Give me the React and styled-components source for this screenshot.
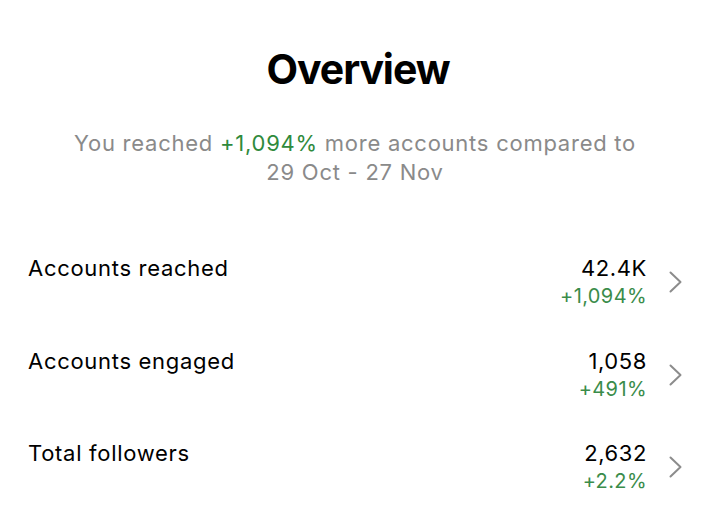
import React from "react";
import styled, { createGlobalStyle } from "styled-components";

const Global = createGlobalStyle`
  html, body { margin: 0; padding: 0; background: #ffffff; }
  body { font-family: Inter, "Noto Sans", "Liberation Sans", sans-serif; -webkit-font-smoothing: antialiased; }
`;

const Page = styled.div`
  width: 716px;
  height: 516px;
  box-sizing: border-box;
  padding: 49px 34px 0 28px;
  display: flex;
  flex-direction: column;
  overflow: hidden;
`;

const Title = styled.h1`
  margin: 0;
  font-size: 41px;
  line-height: 41px;
  font-weight: 700;
  color: #000;
  text-align: center;
  letter-spacing: -1.1px;
  padding-left: 6px;
`;

const Subtitle = styled.p`
  margin: 39px auto 0;
  width: 578px;
  font-size: 22px;
  line-height: 29px;
  color: #8a8a8a;
  text-align: center;
  letter-spacing: 0.75px;
  padding-left: 0;
`;

const Green = styled.span`
  color: ${(p) => p.$tone || "#2f8a3c"};
`;

const List = styled.div`
  margin-top: 67px;
  display: flex;
  flex-direction: column;
  gap: 36.5px;
`;

const Row = styled.div`
  display: flex;
  justify-content: space-between;
  align-items: flex-start;
`;

const Label = styled.div`
  font-size: 22px;
  line-height: 29px;
  letter-spacing: 0.7px;
  color: #000;
`;

const Right = styled.div`
  display: flex;
  align-items: center;
  gap: 22px;
`;

const Values = styled.div`
  display: flex;
  flex-direction: column;
  align-items: flex-end;
`;

const Value = styled.div`
  font-size: 22px;
  line-height: 29px;
  letter-spacing: 0.6px;
  color: #000;
`;

const Change = styled.div`
  font-size: 20px;
  line-height: 27px;
  letter-spacing: 0.4px;
  color: #3a8c4a;
`;

const Chevron = () => (
  <svg width="13" height="22" viewBox="0 0 13 22" fill="none">
    <polyline
      points="1.5,1.5 11.5,11 1.5,20.5"
      stroke="#8c8c8c"
      strokeWidth="2"
      strokeLinecap="round"
      strokeLinejoin="round"
    />
  </svg>
);

const rows = [
  { label: "Accounts reached", value: "42.4K", change: "+1,094%" },
  { label: "Accounts engaged", value: "1,058", change: "+491%" },
  { label: "Total followers", value: "2,632", change: "+2.2%" },
];

export default function App() {
  return (
    <>
      <Global />
      <Page>
        <Title>Overview</Title>
        <Subtitle>
          You reached <Green>+1,094%</Green> more accounts compared to 29 Oct - 27 Nov
        </Subtitle>
        <List>
          {rows.map((r) => (
            <Row key={r.label}>
              <Label>{r.label}</Label>
              <Right>
                <Values>
                  <Value>{r.value}</Value>
                  <Change>{r.change}</Change>
                </Values>
                <Chevron />
              </Right>
            </Row>
          ))}
        </List>
      </Page>
    </>
  );
}
